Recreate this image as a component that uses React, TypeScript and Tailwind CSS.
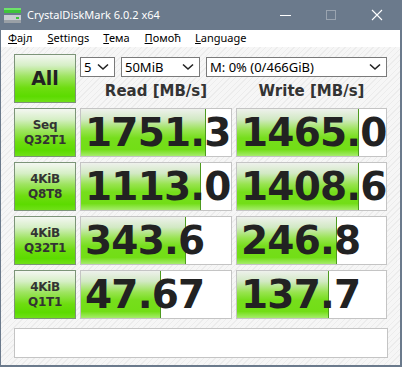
import React from 'react';

type Result = { label: [string, string]; read: string; readPct: number; write: string; writePct: number };

const results: Result[] = [
  { label: ['Seq', 'Q32T1'], read: '1751.3', readPct: 83, write: '1465.0', writePct: 82 },
  { label: ['4KiB', 'Q8T8'], read: '1113.0', readPct: 80, write: '1408.6', writePct: 82 },
  { label: ['4KiB', 'Q32T1'], read: '343.6', readPct: 70, write: '246.8', writePct: 67 },
  { label: ['4KiB', 'Q1T1'], read: '47.67', readPct: 53, write: '137.7', writePct: 62 },
];

const greenBtn =
  'bg-[linear-gradient(to_bottom,#f4f7f2_0%,#d6efc6_22%,#9fe462_45%,#6edd10_70%,#5cdb00_88%,#70e018_100%)]';

const Chevron = () => (
  <svg width="12" height="8" viewBox="0 0 12 8" className="shrink-0">
    <path d="M1 1.5 L6 6 L11 1.5" fill="none" stroke="#222" strokeWidth="1.6" />
  </svg>
);

const Select: React.FC<{ value: string; className: string }> = ({ value, className }) => (
  <div
    className={`h-[20px] flex items-center justify-between border border-[#7a7a7a] bg-white pl-[3px] pr-[5px] text-[13px] text-black ${className}`}
    style={{ fontFamily: '"Noto Sans", sans-serif' }}
  >
    <span className="leading-none">{value}</span>
    <Chevron />
  </div>
);

const Value: React.FC<{ text: string; pct: number }> = ({ text, pct }) => (
  <div className="relative h-[49px] border border-[#c4c4c4] bg-white overflow-hidden">
    <div
      className="absolute left-0 top-0 bottom-0 border-r border-[#4d9a1e] bg-[linear-gradient(to_bottom,#eef1ec_0%,#d2e9c4_22%,#98e450_45%,#76de1c_62%,#72de16_86%,#a6ec6c_100%)]"
      style={{ width: `${pct}%` }}
    />
    <div
      className="relative h-full flex items-center pl-[4px] text-[39px] font-bold text-[#222] leading-none tracking-[-0.8px]"
      style={{ fontFamily: '"DejaVu Sans", Verdana, sans-serif' }}
    >
      {text}
    </div>
  </div>
);

export default function App() {
  return (
    <div className="w-[402px] h-[367px] flex flex-col bg-[#6b7a8c] border-l border-r-2 border-b-2 border-[#6b7a8c] overflow-hidden">
      {/* title bar */}
      <div className="h-[30px] flex items-center text-white shrink-0" style={{ fontFamily: '"Noto Sans", sans-serif' }}>
        <svg width="17" height="16" viewBox="0 0 17 16" className="ml-[3px] mr-[6px]">
          <rect x="0" y="1" width="17" height="5" fill="#3fc43a" />
          <rect x="0" y="1" width="17" height="2" fill="#6ee36a" />
          <rect x="0" y="8" width="17" height="8" fill="#c8ccd0" />
          <rect x="0" y="13" width="17" height="3" fill="#9aa0a6" />
          <rect x="12" y="10" width="3" height="2" fill="#3fc43a" />
        </svg>
        <span className="text-[11px]">CrystalDiskMark 6.0.2 x64</span>
        <div className="ml-auto flex items-center">
          <div className="w-[46px] h-[30px] flex items-center justify-center">
            <div className="w-[11px] h-[1px] bg-white" />
          </div>
          <div className="w-[46px] h-[30px] flex items-center justify-center">
            <div className="w-[10px] h-[10px] border border-[#9aa4b0]" />
          </div>
          <div className="w-[46px] h-[30px] flex items-center justify-center">
            <svg width="12" height="12" viewBox="0 0 12 12">
              <path d="M1 1 L11 11 M11 1 L1 11" stroke="white" strokeWidth="1.1" />
            </svg>
          </div>
        </div>
      </div>

      {/* menu bar */}
      <div
        className="h-[17px] bg-white flex items-center text-[11px] text-black shrink-0"
        style={{ fontFamily: '"Noto Sans", sans-serif' }}
      >
        <span className="ml-[7px]"><u>Ф</u>ајл</span>
        <span className="ml-[15px]"><u>S</u>ettings</span>
        <span className="ml-[14px]"><u>Т</u>ема</span>
        <span className="ml-[15px]"><u>П</u>омоћ</span>
        <span className="ml-[14px]"><u>L</u>anguage</span>
      </div>

      {/* client area */}
      <div className="flex-1 bg-[repeating-linear-gradient(135deg,#f6f6f6_0px,#f6f6f6_3px,#ececec_3px,#ececec_4px)] pl-[13px] pt-[7px]">
        <div className="grid grid-cols-[62px_152px_151px] gap-x-[4px] gap-y-[5px]">
          <div
            className={`h-[49px] border border-[#7c9478] ${greenBtn} flex items-center justify-center text-[19px] font-bold text-[#222]`}
            style={{ fontFamily: '"DejaVu Sans", Verdana, sans-serif' }}
          >
            All
          </div>
          <div className="col-span-2 flex flex-col">
            <div className="flex mt-[3px]">
              <Select value="5" className="w-[35px]" />
              <Select value="50MiB" className="w-[79px] ml-[6px]" />
              <Select value="M: 0% (0/466GiB)" className="w-[181px] ml-[6px]" />
            </div>
            <div
              className="flex-1 grid grid-cols-[152px_151px] gap-x-[4px] items-center text-[15px] font-bold text-[#333]"
              style={{ fontFamily: '"DejaVu Sans", Verdana, sans-serif' }}
            >
              <div className="text-center pt-[3px]">Read [MB/s]</div>
              <div className="text-center pt-[3px]">Write [MB/s]</div>
            </div>
          </div>

          {results.map((r) => (
            <React.Fragment key={r.read}>
              <div
                className={`h-[49px] border border-[#7c9478] ${greenBtn} flex flex-col items-center justify-center text-[12px] font-bold leading-[15px] text-[#333] tracking-[-0.3px]`}
                style={{ fontFamily: '"DejaVu Sans", Verdana, sans-serif' }}
              >
                <span>{r.label[0]}</span>
                <span>{r.label[1]}</span>
              </div>
              <Value text={r.read} pct={r.readPct} />
              <Value text={r.write} pct={r.writePct} />
            </React.Fragment>
          ))}
        </div>

        {/* comment box */}
        <div className="mt-[9px] w-[374px] h-[30px] border border-[#c4c4c4] bg-white" />
      </div>
    </div>
  );
}
